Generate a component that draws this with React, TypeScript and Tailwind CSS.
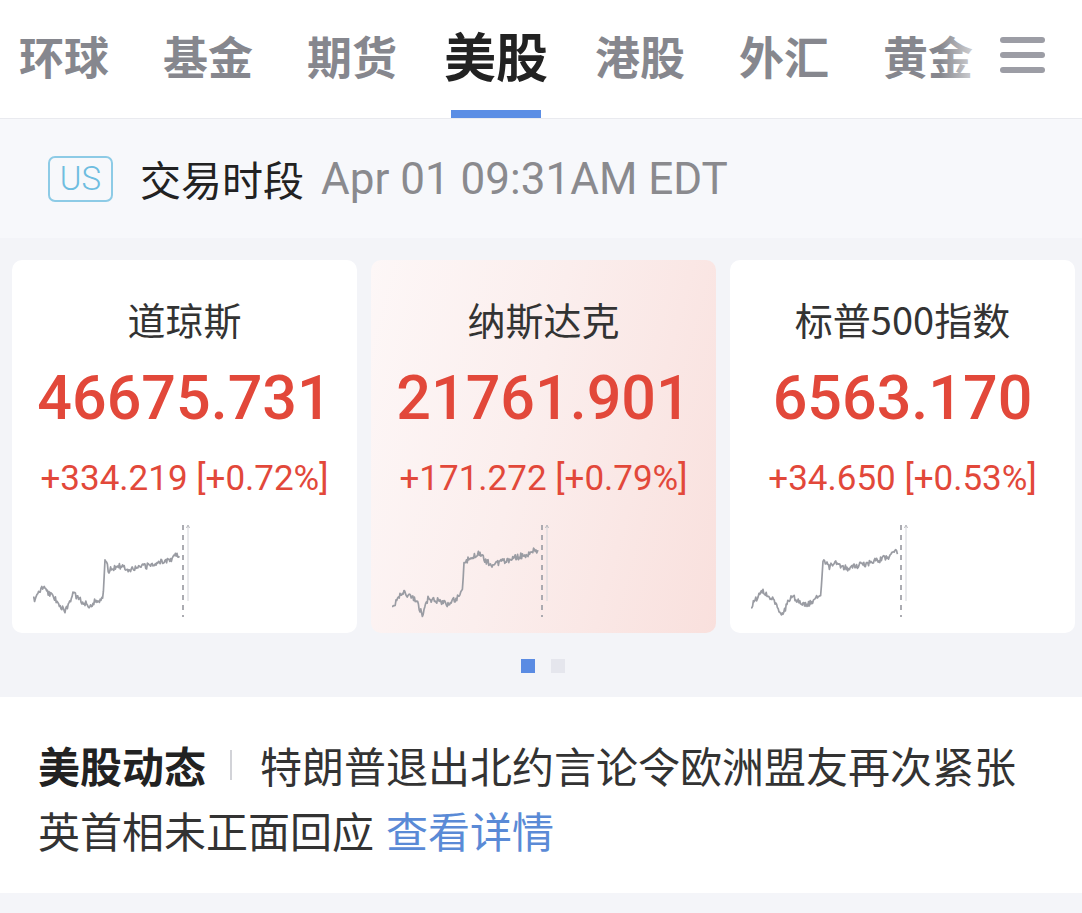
import React from 'react';

// ─── Data ─────────────────────────────────────────────────────
const TABS = ['环球', '基金', '期货', '美股', '港股', '外汇', '黄金'];
const ACTIVE_TAB = '美股';

type Pt = [number, number];

interface IndexCard {
  name: string;
  price: string;
  change: string;
  seed: number;
  shape: Pt[];
  highlight?: boolean;
}

const CARDS: IndexCard[] = [
  {
    name: '道琼斯',
    price: '46675.731',
    change: '+334.219 [+0.72%]',
    seed: 7,
    shape: [
      [0, 78], [4, 72], [10, 64], [18, 72], [26, 80], [32, 90], [40, 70], [48, 78],
      [56, 82], [64, 78], [70, 74], [72, 38], [76, 48], [84, 42], [96, 46],
      [110, 44], [124, 40], [138, 36], [144, 30], [147, 34],
    ],
  },
  {
    name: '纳斯达克',
    price: '21761.901',
    change: '+171.272 [+0.79%]',
    seed: 19,
    highlight: true,
    shape: [
      [0, 86], [6, 74], [12, 70], [18, 74], [24, 76], [30, 92], [36, 76], [46, 78],
      [56, 82], [66, 74], [70, 70], [72, 40], [80, 34], [88, 30], [94, 38],
      [100, 42], [112, 38], [126, 34], [138, 30], [144, 26], [147, 30],
    ],
  },
  {
    name: '标普500指数',
    price: '6563.170',
    change: '+34.650 [+0.53%]',
    seed: 31,
    shape: [
      [0, 84], [4, 78], [10, 68], [18, 72], [24, 80], [32, 92], [40, 72], [48, 78],
      [56, 82], [64, 76], [70, 72], [72, 36], [78, 44], [86, 40], [96, 46],
      [110, 42], [124, 38], [138, 34], [144, 28], [147, 32],
    ],
  },
];

// ─── Helpers ──────────────────────────────────────────────────
function rng(seed: number) {
  let s = seed >>> 0;
  return () => {
    s = (s + 0x6d2b79f5) >>> 0;
    let t = s;
    t = Math.imul(t ^ (t >>> 15), t | 1);
    t ^= t + Math.imul(t ^ (t >>> 7), t | 61);
    return ((t ^ (t >>> 14)) >>> 0) / 4294967296;
  };
}

function buildPath(shape: Pt[], seed: number) {
  const rand = rng(seed);
  const end = shape[shape.length - 1][0];
  const pts: string[] = [];
  let j = 0;
  for (let x = 0; x <= end; x += 0.8) {
    while (j < shape.length - 2 && shape[j + 1][0] < x) j++;
    const [x0, y0] = shape[j];
    const [x1, y1] = shape[j + 1];
    const t = x1 === x0 ? 0 : (x - x0) / (x1 - x0);
    const y = y0 + (y1 - y0) * Math.min(1, Math.max(0, t)) + (rand() - 0.5) * 6;
    pts.push(`${x.toFixed(1)},${y.toFixed(1)}`);
  }
  return 'M' + pts.join(' L');
}

const FONT = { fontFamily: '"Roboto","Noto Sans CJK SC",sans-serif' };
const CJK = { fontFamily: '"Noto Sans CJK SC","Roboto",sans-serif' };

// ─── Sparkline ────────────────────────────────────────────────
function Sparkline({ shape, seed }: { shape: Pt[]; seed: number }) {
  const d = buildPath(shape, seed);
  return (
    <svg width="160" height="96" viewBox="0 0 160 96" className="block">
      <path d={d} fill="none" stroke="#9a9ca3" strokeWidth="1.7" strokeLinejoin="round" />
      <line x1="150" y1="2" x2="150" y2="94" stroke="#a3a4aa" strokeWidth="1.8" strokeDasharray="5 5" />
      <line x1="155" y1="3" x2="155" y2="78" stroke="#d4d5da" strokeWidth="1" />
      <path d="M153.5 5 L155 2 L156.5 5" fill="none" stroke="#b5b6bb" strokeWidth="1" />
    </svg>
  );
}

// ─── Card ─────────────────────────────────────────────────────
function Card({ card }: { card: IndexCard }) {
  return (
    <div
      className={`w-[345px] h-[373px] shrink-0 rounded-[10px] flex flex-col items-center pt-[40px] ${
        card.highlight
          ? 'bg-[linear-gradient(105deg,#fdf7f7_0%,#fbeeed_45%,#f9e0dd_100%)]'
          : 'bg-white'
      }`}
    >
      <div className="text-[38px] leading-none text-[#333]" style={CJK}>
        {card.name}
      </div>
      <div className="mt-[30px] text-[61px] leading-none font-medium text-[#e2483a]" style={FONT}>
        {card.price}
      </div>
      <div className="mt-[32px] text-[35px] leading-none text-[#e2483a]" style={FONT}>
        {card.change}
      </div>
      <div className="mt-[27px] self-start ml-[21px]">
        <Sparkline shape={card.shape} seed={card.seed} />
      </div>
    </div>
  );
}

// ─── App ──────────────────────────────────────────────────────
export default function App() {
  return (
    <div className="min-h-screen bg-[#f4f5f9] w-[1082px] overflow-hidden" style={CJK}>
      {/* Tab bar */}
      <div className="relative h-[119px] bg-white border-b border-[#e9eaef]">
        <div className="flex h-full -ml-2 overflow-hidden">
          {TABS.map((tab) => {
            const active = tab === ACTIVE_TAB;
            return (
              <div key={tab} className="relative w-[144px] shrink-0 h-full flex items-center justify-center pb-[8px]">
                <span
                  className={`leading-none font-bold ${
                    active ? 'text-[52px] text-[#222]' : 'text-[45px] text-[#86878e]'
                  }`}
                >
                  {tab}
                </span>
                {active && <div className="absolute bottom-0 w-[90px] h-[8px] bg-[#5b8ee5]" />}
              </div>
            );
          })}
        </div>
        <div className="absolute right-0 top-0 h-full w-[142px] flex items-center justify-end pr-[37px] pb-[8px] bg-[linear-gradient(to_right,rgba(255,255,255,0)_0%,#fff_38%)]">
          <div className="flex flex-col gap-[9px]">
            <div className="w-[45px] h-[6px] rounded-full bg-[#9c9da5]" />
            <div className="w-[45px] h-[6px] rounded-full bg-[#9c9da5]" />
            <div className="w-[45px] h-[6px] rounded-full bg-[#9c9da5]" />
          </div>
        </div>
      </div>

      {/* Trading session */}
      <div className="h-[119px] bg-[#f7f8fb] flex items-center px-[48px]">
        <div className="w-[65px] h-[46px] border-2 border-[#8dcbe6] rounded-[7px] flex items-center justify-center">
          <span className="text-[33px] leading-none font-light text-[#6ebde0]" style={FONT}>
            US
          </span>
        </div>
        <span className="ml-[27px] text-[41px] leading-none text-[#222]">交易时段</span>
        <span className="ml-[17px] text-[44px] leading-none text-[#8a8a8e]" style={FONT}>
          Apr 01 09:31AM EDT
        </span>
      </div>

      {/* Index cards */}
      <div className="bg-[#f3f4f8] pt-[22px] pb-[24px]">
        <div className="flex gap-[14px] pl-[12px] overflow-hidden">
          {CARDS.map((c) => (
            <Card key={c.name} card={c} />
          ))}
        </div>
        <div className="mt-[26px] flex justify-center gap-[16px] pl-[4px]">
          <div className="w-[14px] h-[14px] bg-[#5a8be3]" />
          <div className="w-[14px] h-[14px] bg-[#e5e6ed]" />
        </div>
      </div>

      {/* News */}
      <div className="bg-white px-[38px] pt-[35px] pb-[31px]">
        <div className="flex flex-wrap items-center text-[42px] leading-[65px] text-[#333]">
          <span className="font-bold text-[#222]">美股动态</span>
          <span className="w-[2px] h-[30px] bg-[#d2d3d8] ml-[24px] mr-[28px]" />
          <span>特朗普退出北约言论令欧洲盟友再次紧张</span>
          <span>英首相未正面回应</span>
          <span className="ml-[12px] text-[#5a8ad6]">查看详情</span>
        </div>
      </div>
    </div>
  );
}
